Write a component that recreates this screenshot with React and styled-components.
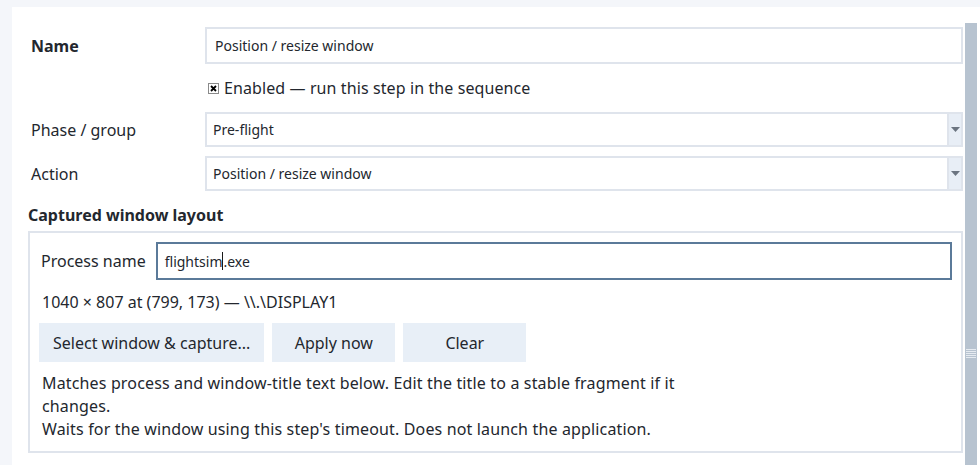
import React from 'react';
import styled, { createGlobalStyle } from 'styled-components';

const GlobalStyle = createGlobalStyle`
  html, body {
    margin: 0;
    padding: 0;
    background: #f4f6fa;
    font-family: "Noto Sans", "Open Sans", sans-serif;
    color: #23272e;
  }
`;

const Page = styled.div`
  width: 980px;
  height: 465px;
  overflow: hidden;
  padding: 7px 0 0 12px;
  box-sizing: border-box;
`;

const Panel = styled.div`
  background: #ffffff;
  height: 100%;
  display: flex;
  padding: 0 3px 0 16px;
`;

const Content = styled.div`
  flex: 1;
  padding-top: 20px;
  margin-right: 2px;
  display: flex;
  flex-direction: column;
`;

const FormGrid = styled.div`
  display: grid;
  grid-template-columns: 177px 1fr;
  align-items: center;
  row-gap: 9px;
`;

const Label = styled.div`
  padding-left: 3px;
  font-size: 16px;
  font-weight: ${(p) => (p.$bold ? 700 : 400)};
`;

const TextInput = styled.div`
  height: 37px;
  box-sizing: border-box;
  border: 2px solid ${(p) => (p.$focused ? '#5b7a99' : '#dfe4ec')};
  background: #fff;
  display: flex;
  align-items: center;
  padding-left: 8px;
  font-size: 14px;
  color: #23272e;
`;

const Caret = styled.span`
  display: inline-block;
  width: 1px;
  height: 18px;
  background: #1a1a1a;
`;

const CheckRow = styled.label`
  grid-column: 2;
  display: flex;
  align-items: center;
  gap: 5px;
  height: 30px;
  padding-left: 3px;
  font-size: 16px;
  letter-spacing: 0.1px;
`;

const Select = styled.div`
  height: 35px;
  box-sizing: border-box;
  border: 2px solid #dfe4ec;
  display: flex;
  align-items: stretch;
`;

const SelectValue = styled.div`
  flex: 1;
  display: flex;
  align-items: center;
  padding-left: 6px;
  font-size: 14px;
`;

const SelectArrow = styled.div`
  width: 12px;
  border-left: 2px solid #dfe4ec;
  background: #e8eef6;
  display: flex;
  align-items: center;
  justify-content: center;
`;

const Heading = styled.div`
  font-size: 16px;
  font-weight: 700;
  margin-top: 11px;
  height: 29px;
  line-height: 26px;
`;

const GroupBox = styled.div`
  border: 2px solid #dfe4ec;
  padding: 9px 9px 10px 11px;
  display: flex;
  flex-direction: column;
  font-size: 16px;
`;

const ProcessRow = styled.div`
  display: flex;
  align-items: center;
  gap: 10px;
`;

const ProcessInput = styled(TextInput)`
  flex: 1;
  height: 38px;
  padding-left: 7px;
`;

const Info = styled.div`
  margin-top: 10px;
  height: 24px;
  line-height: 24px;
  padding-left: 1px;
`;

const ButtonRow = styled.div`
  display: flex;
  gap: 8px;
  margin: 9px 0 0 -2px;
`;

const Button = styled.button`
  height: 39px;
  min-width: 123px;
  padding: 0 14px;
  border: none;
  background: #e8eff7;
  font-family: inherit;
  font-size: 16px;
  color: #23272e;
`;

const Hint = styled.div`
  margin-top: 10px;
  max-width: 680px;
  line-height: 23px;
  padding-left: 1px;
  letter-spacing: 0.15px;
`;

const ScrollTrack = styled.div`
  width: 12px;
  padding-top: 16px;
  display: flex;
  flex-direction: column;
`;

const ScrollThumb = styled.div`
  flex: 1;
  background: #b7c3d0;
  display: flex;
  justify-content: center;
  padding-top: 326px;
`;

const Grip = styled.div`
  width: 10px;
  height: 10px;
  background: repeating-linear-gradient(
    to bottom,
    #e6ebf1 0 1px,
    transparent 1px 2px
  );
`;

const CheckBox = () => (
  <svg width="11" height="11" viewBox="0 0 11 11">
    <rect x="0.5" y="0.5" width="10" height="10" fill="#fff" stroke="#8a8a8a" />
    <path d="M3 3 L8 8 M8 3 L3 8" stroke="#000" strokeWidth="1.8" />
  </svg>
);

const Arrow = () => (
  <svg width="9" height="5" viewBox="0 0 9 5">
    <path d="M0 0 H9 L4.5 5 Z" fill="#6b7480" />
  </svg>
);

export default function App() {
  return (
    <>
      <GlobalStyle />
      <Page>
        <Panel>
          <Content>
            <FormGrid>
              <Label $bold>Name</Label>
              <TextInput>Position / resize window</TextInput>
              <CheckRow>
                <CheckBox />
                Enabled — run this step in the sequence
              </CheckRow>
              <Label>Phase / group</Label>
              <Select>
                <SelectValue>Pre-flight</SelectValue>
                <SelectArrow><Arrow /></SelectArrow>
              </Select>
              <Label>Action</Label>
              <Select>
                <SelectValue>Position / resize window</SelectValue>
                <SelectArrow><Arrow /></SelectArrow>
              </Select>
            </FormGrid>
            <Heading>Captured window layout</Heading>
            <GroupBox>
              <ProcessRow>
                <span>Process name</span>
                <ProcessInput $focused>
                  flightsim<Caret />.exe
                </ProcessInput>
              </ProcessRow>
              <Info>1040 × 807 at (799, 173) — \\.\DISPLAY1</Info>
              <ButtonRow>
                <Button>Select window &amp; capture...</Button>
                <Button>Apply now</Button>
                <Button>Clear</Button>
              </ButtonRow>
              <Hint>
                Matches process and window-title text below. Edit the title to a stable fragment if it changes.
                <br />
                Waits for the window using this step's timeout. Does not launch the application.
              </Hint>
            </GroupBox>
          </Content>
          <ScrollTrack>
            <ScrollThumb>
              <Grip />
            </ScrollThumb>
          </ScrollTrack>
        </Panel>
      </Page>
    </>
  );
}
